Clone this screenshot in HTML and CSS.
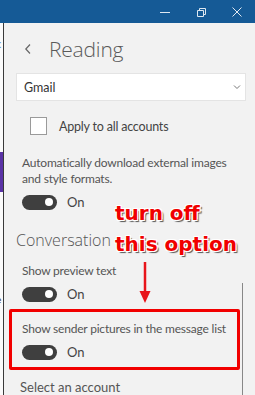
FILE: index.html
```html
<!DOCTYPE html>
<html>
<head>
<meta charset="utf-8">
<link rel="stylesheet" href="styles.css">
</head>
<body>
<div class="window">
  <header class="titlebar">
    <span class="tb-btn">
      <svg width="12" height="12" viewBox="0 0 12 12"><path d="M1 6.5h10" stroke="#dfe8f1" stroke-width="1" fill="none"/></svg>
    </span>
    <span class="tb-btn">
      <svg width="12" height="12" viewBox="0 0 12 12"><path d="M2.5 4.5h6v6h-6z M4.5 4.5v-2h6v6h-2" stroke="#dfe8f1" stroke-width="1" fill="none"/></svg>
    </span>
    <span class="tb-btn">
      <svg width="12" height="12" viewBox="0 0 12 12"><path d="M1.5 1.5l9 9M10.5 1.5l-9 9" stroke="#dfe8f1" stroke-width="1" fill="none"/></svg>
    </span>
  </header>
  <div class="main">
    <aside class="leftpane">
      <span class="lp-c">c</span>
      <span class="lp-accent"></span>
      <span class="lp-e">e</span>
    </aside>
    <section class="settings">
      <div class="heading">
        <span class="back">
          <svg width="8" height="12" viewBox="0 0 8 12"><path d="M6 1.5L1.8 6 6 10.5" stroke="#666" stroke-width="1.2" fill="none"/></svg>
        </span>
        <h1 class="title">Reading</h1>
      </div>
      <div class="select">
        <span>Gmail</span>
        <svg width="8" height="6" viewBox="0 0 8 6"><path d="M1 1.5l3 3 3-3" stroke="#777" stroke-width="1" fill="none"/></svg>
      </div>
      <label class="check-row">
        <span class="checkbox"></span>
        <span>Apply to all accounts</span>
      </label>
      <div class="setting first">
        <p class="label">Automatically download external images and style formats.</p>
        <div class="toggle-row"><span class="toggle"></span><span class="state">On</span></div>
      </div>
      <h2 class="section">Conversation</h2>
      <div class="setting">
        <p class="label">Show preview text</p>
        <div class="toggle-row"><span class="toggle"></span><span class="state">On</span></div>
      </div>
      <div class="setting highlight">
        <p class="label">Show sender pictures in the message list</p>
        <div class="toggle-row"><span class="toggle"></span><span class="state">On</span></div>
      </div>
      <p class="account">Select an account</p>
      <span class="scrollbar"></span>
    </section>
  </div>
  <div class="note">
    <span>turn off</span>
    <span>this option</span>
  </div>
  <svg class="arrow" width="12" height="42" viewBox="0 0 12 42"><path d="M6 0v32" stroke="#e8141a" stroke-width="2.5"/><path d="M0.5 29L6 41 11.5 29z" fill="#e8141a"/></svg>
</div>
</body>
</html>
```
FILE: styles.css
```css
* { box-sizing: border-box; }
html, body { margin: 0; padding: 0; }
body {
  width: 255px;
  height: 395px;
  overflow: hidden;
  font-family: Lato, "Open Sans", sans-serif;
  background: #f2f2f2;
}
.window { position: relative; width: 255px; height: 395px; display: flex; flex-direction: column; }
.titlebar {
  height: 23px;
  background: #155a96;
  display: flex;
  justify-content: flex-end;
  align-items: center;
  flex: none;
}
.tb-btn { width: 36px; height: 23px; display: flex; align-items: center; justify-content: center; }
.main { flex: 1; display: flex; min-height: 0; }
.leftpane {
  width: 4px;
  flex: none;
  background: #fbfbfb;
  border-right: 1px solid #3a3a3a;
  position: relative;
  overflow: hidden;
}
.lp-c { position: absolute; left: -4px; top: 14px; font-size: 11px; color: #3a7ac0; }
.lp-accent { position: absolute; left: 0; top: 129px; width: 3px; height: 40px; background: #5a33a6; }
.lp-e { position: absolute; left: -4px; top: 270px; font-size: 10px; color: #222; }
.settings {
  flex: 1;
  position: relative;
  padding: 0 9px 0 12px;
  color: #444;
}
.heading { display: flex; align-items: center; height: 50px; padding-top: 2px; }
.back { width: 33px; padding-left: 8px; display: flex; align-items: center; }
.title {
  margin: 0;
  font-family: "Open Sans", sans-serif;
  font-weight: 300;
  font-size: 21px;
  color: #5a5a5a;
  letter-spacing: -0.2px;
}
.select {
  height: 28px;
  background: #fff;
  border: 1px solid #e4e4e4;
  display: flex;
  align-items: center;
  justify-content: space-between;
  padding: 0 4px 0 7px;
  font-size: 12.5px;
  color: #333;
}
.check-row {
  display: flex;
  align-items: center;
  gap: 12px;
  margin: 16px 0 0 14px;
  font-size: 12.5px;
  letter-spacing: -0.2px;
  color: #444;
}
.checkbox { width: 17px; height: 18px; background: #fff; border: 1px solid #9a9a9a; }
.setting { padding: 0 0 0 6px; }
.setting.first { margin-top: 20px; }
.label { margin: 0; font-size: 12px; line-height: 16px; color: #555; letter-spacing: -0.2px; white-space: normal; }
.toggle-row { display: flex; align-items: center; gap: 10px; margin-top: 7px; height: 16px; }
.toggle {
  width: 35px; height: 15px; border-radius: 8px; background: #3f3f3f; position: relative;
}
.toggle::after {
  content: ""; position: absolute; right: 4px; top: 3.5px; width: 8px; height: 8px; border-radius: 50%; background: #fff;
}
.state { font-size: 13px; color: #444; }
.section {
  margin: 19px 0 12px;
  font-family: "Open Sans", sans-serif;
  font-weight: 300;
  font-size: 16px;
  color: #555;
}
.highlight {
  margin: 7px 0 0 -7px;
  border: 3px solid #f20000;
  border-radius: 2px;
  padding: 9px 0 7px 10px;
  width: 231px;
}
.highlight .label { white-space: nowrap; }
.account { margin: 9px 0 0 4px; font-size: 13px; line-height: 16px; color: #555; }
.scrollbar { position: absolute; left: 238px; top: 260px; width: 1px; height: 120px; background: #888; }
.note {
  position: absolute;
  left: 115px;
  top: 198px;
  display: flex;
  flex-direction: column;
  font-family: "DejaVu Sans", sans-serif;
  font-weight: bold;
  font-size: 20px;
  line-height: 31px;
  color: #f00000;
  text-shadow: -1px -1px 0 #fff, 1px -1px 0 #fff, -1px 1px 0 #fff, 1px 1px 0 #fff, 2px 2px 1px #555;
}
.arrow { position: absolute; left: 139px; top: 262px; }
```
